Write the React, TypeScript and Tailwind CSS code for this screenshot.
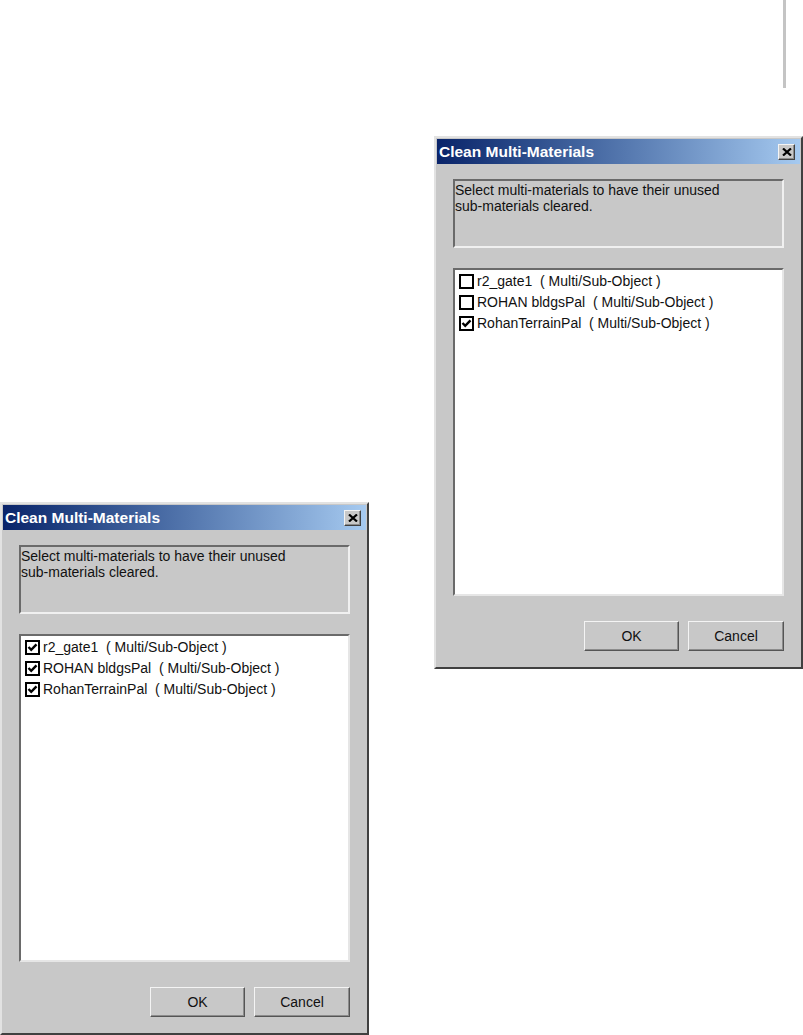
import React from 'react';

type Item = { name: string; checked: boolean };

const font = "font-['Liberation_Sans',Arial,sans-serif]";

const CheckBox: React.FC<{ checked: boolean }> = ({ checked }) => (
  <div className="w-[15px] h-[15px] border-2 border-black bg-white flex items-center justify-center shrink-0">
    {checked && (
      <svg width="11" height="11" viewBox="0 0 11 11">
        <polyline points="1.5,5 4.2,7.8 9.5,2.3" fill="none" stroke="black" strokeWidth="2.4" />
      </svg>
    )}
  </div>
);

const Button: React.FC<{ label: string; width: string }> = ({ label, width }) => (
  <button
    className={`${width} h-[30px] bg-[#c8c8c8] text-[14px] text-[#111] border border-t-[#f4f4f4] border-l-[#f4f4f4] border-r-[#555] border-b-[#555] shadow-[inset_-1px_-1px_0_#8c8c8c] ${font}`}
  >
    {label}
  </button>
);

const Dialog: React.FC<{ items: Item[]; className: string }> = ({ items, className }) => (
  <div
    className={`absolute w-[369px] h-[533px] flex flex-col bg-[#c8c8c8] border-2 border-t-[#e2e2e2] border-l-[#e2e2e2] border-r-[#404040] border-b-[#404040] ${font} ${className}`}
  >
    {/* title bar */}
    <div className="mx-[1px] mt-[1px] h-[25px] flex items-center justify-between bg-gradient-to-r from-[#0a246a] to-[#a6caf0]">
      <span className="pl-[2px] text-[15.5px] font-bold text-white">Clean Multi-Materials</span>
      <div className="mr-[5px] w-[17px] h-[16px] bg-[#c8c8c8] border border-t-[#f4f4f4] border-l-[#f4f4f4] border-r-[#404040] border-b-[#404040] shadow-[inset_-1px_-1px_0_#8c8c8c] flex items-center justify-center">
        <svg width="10" height="8" viewBox="0 0 10 8">
          <path d="M1 0.5 L9 7.5 M9 0.5 L1 7.5" stroke="black" strokeWidth="2.2" />
        </svg>
      </div>
    </div>

    <div className="flex flex-col px-[17px]">
      {/* description */}
      <div className="mt-[15px] h-[69px] border-2 border-t-[#6a6a6a] border-l-[#6a6a6a] border-r-[#f0f0f0] border-b-[#f0f0f0] text-[14px] leading-[16px] text-[#111] pt-[1px]">
        Select multi-materials to have their unused
        <br />
        sub-materials cleared.
      </div>

      {/* list */}
      <div className="mt-[20px] h-[328px] bg-white border-2 border-t-[#6a6a6a] border-l-[#6a6a6a] border-r-[#e6e6e6] border-b-[#e6e6e6] pl-[4px] pt-[1px]">
        {items.map(item => (
          <div key={item.name} className="h-[21px] flex items-center gap-[3px]">
            <CheckBox checked={item.checked} />
            <span className="text-[14px] text-[#111] whitespace-pre">{`${item.name}  ( Multi/Sub-Object )`}</span>
          </div>
        ))}
      </div>

      {/* buttons */}
      <div className="mt-[25px] flex justify-end gap-[9px]">
        <Button label="OK" width="w-[95px]" />
        <Button label="Cancel" width="w-[96px]" />
      </div>
    </div>
  </div>
);

const App: React.FC = () => {
  return (
    <div className="relative w-[803px] h-[1035px] bg-white overflow-hidden">
      <div className="absolute left-[783px] top-0 w-[3px] h-[88px] bg-[#c4c4c4]" />
      <Dialog
        className="left-[434px] top-[136px]"
        items={[
          { name: 'r2_gate1', checked: false },
          { name: 'ROHAN bldgsPal', checked: false },
          { name: 'RohanTerrainPal', checked: true },
        ]}
      />
      <Dialog
        className="left-0 top-[502px]"
        items={[
          { name: 'r2_gate1', checked: true },
          { name: 'ROHAN bldgsPal', checked: true },
          { name: 'RohanTerrainPal', checked: true },
        ]}
      />
    </div>
  );
};

export default App;
